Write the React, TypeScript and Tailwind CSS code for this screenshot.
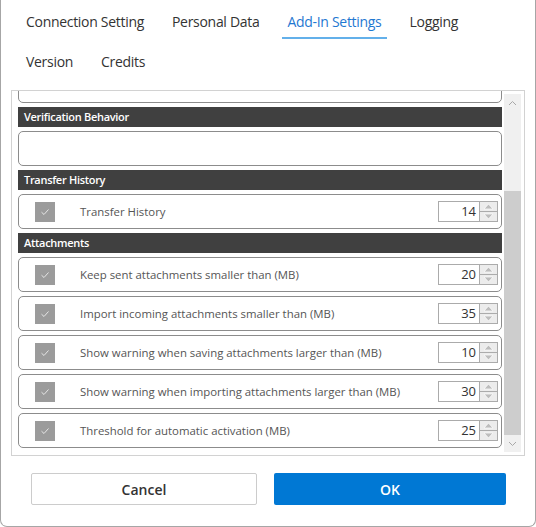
import React from "react";

const tabsRow1 = ["Connection Setting", "Personal Data", "Add-In Settings", "Logging"];
const tabsRow2 = ["Version", "Credits"];

function Tab({ label, active }: { label: string; active?: boolean }) {
  return (
    <div
      className={
        "px-[5px] pb-[5px] pt-[7px] text-[14px] tracking-[-0.3px] leading-[20px] border-b-2 " +
        (active ? "border-[#63b0ea] text-[#1f78d1]" : "border-transparent text-[#333]")
      }
    >
      {label}
    </div>
  );
}

function Header({ title }: { title: string }) {
  return (
    <div className="h-[20px] bg-[#404040] text-white text-[11px] tracking-[-0.3px] font-semibold leading-[20px] pl-[6px]">
      {title}
    </div>
  );
}

function Check() {
  return (
    <div className="w-[20px] h-[20px] bg-[#9b9b9b] flex items-center justify-center">
      <svg width="10" height="8" viewBox="0 0 10 8">
        <path d="M1.5 4.2 L4 6.5 L8.5 1.5" fill="none" stroke="#e6e6e6" strokeWidth="1" />
      </svg>
    </div>
  );
}

function Spin({ value }: { value: number }) {
  return (
    <div className="flex h-[21px]">
      <div className="w-[42px] h-full border border-[#ababab] bg-white text-right pr-[3px] text-[13px] leading-[19px] text-[#333]">
        {value}
      </div>
      <div className="w-[18px] h-full flex flex-col border border-l-0 border-[#ababab] bg-[#ababab] gap-[1px]">
        <div className="flex-1 bg-[#ececec] flex items-center justify-center">
          <svg width="11" height="7" viewBox="0 0 11 7">
            <path d="M1 6 L5.5 1 L10 6 Z" fill="#bdbdbd" stroke="#fafafa" strokeWidth="0.8" />
          </svg>
        </div>
        <div className="flex-1 bg-[#ececec] flex items-center justify-center">
          <svg width="11" height="7" viewBox="0 0 11 7">
            <path d="M1 1 L5.5 6 L10 1 Z" fill="#bdbdbd" stroke="#fafafa" strokeWidth="0.8" />
          </svg>
        </div>
      </div>
    </div>
  );
}

function Row({ label, value }: { label: string; value: number }) {
  return (
    <div className="h-[35px] border border-[#8c8c8c] rounded-[5px] flex items-center pl-[16px] pr-[3px]">
      <Check />
      <div className="ml-[25px] flex-1 text-[11.4px] text-[#555]">{label}</div>
      <Spin value={value} />
    </div>
  );
}

const attachments = [
  { label: "Keep sent attachments smaller than (MB)", value: 20 },
  { label: "Import incoming attachments smaller than (MB)", value: 35 },
  { label: "Show warning when saving attachments larger than (MB)", value: 10 },
  { label: "Show warning when importing attachments larger than (MB)", value: 30 },
  { label: "Threshold for automatic activation (MB)", value: 25 },
];

export default function App() {
  return (
    <div
      className="w-[536px] h-[527px] bg-white border border-t-0 border-[#a6a6a6] rounded-b-[7px] overflow-hidden flex flex-col"
      style={{ fontFamily: '"Open Sans", "Noto Sans", sans-serif' }}
    >
      {/* tabs */}
      <div className="pl-[20px] pt-[5px] flex flex-col gap-[6px]">
        <div className="flex gap-[18px]">
          {tabsRow1.map((t) => (
            <Tab key={t} label={t} active={t === "Add-In Settings"} />
          ))}
        </div>
        <div className="flex gap-[18px]">
          {tabsRow2.map((t) => (
            <Tab key={t} label={t} />
          ))}
        </div>
      </div>

      {/* settings panel */}
      <div className="mx-[10px] mt-[11px] h-[366px] border border-[#d2d2d2] flex">
        <div className="flex-1 overflow-hidden pl-[6px]">
          <div className="-mt-[23px] flex flex-col gap-[4px]">
            <div className="h-[35px] border border-[#8c8c8c] rounded-[5px]" />
            <Header title="Verification Behavior" />
            <div className="h-[35px] border border-[#8c8c8c] rounded-[5px]" />
            <Header title="Transfer History" />
            <Row label="Transfer History" value={14} />
            <Header title="Attachments" />
            {attachments.map((a) => (
              <Row key={a.label} label={a.label} value={a.value} />
            ))}
          </div>
        </div>
        <div className="pl-[2px] pr-[3px] py-[3px]">
          <div className="w-[17px] h-full bg-[#f0f0f0] flex flex-col">
            <div className="h-[17px] flex items-center justify-center">
              <svg width="9" height="6" viewBox="0 0 9 6">
                <path d="M1 5 L4.5 1.5 L8 5" fill="none" stroke="#a8a8a8" strokeWidth="1" />
              </svg>
            </div>
            <div className="h-[80px]" />
            <div className="flex-1 bg-[#cdcdcd]" />
            <div className="h-[17px] flex items-center justify-center">
              <svg width="9" height="6" viewBox="0 0 9 6">
                <path d="M1 1 L4.5 4.5 L8 1" fill="none" stroke="#a8a8a8" strokeWidth="1" />
              </svg>
            </div>
          </div>
        </div>
      </div>

      {/* buttons */}
      <div className="flex gap-[17px] pl-[30px] mt-[17px]">
        <button className="w-[226px] h-[32px] border border-[#cccccc] rounded-[2px] bg-white text-[14px] font-semibold text-[#333]">
          Cancel
        </button>
        <button className="w-[232px] h-[32px] rounded-[2px] bg-[#0078d4] text-[14px] font-semibold text-white">
          OK
        </button>
      </div>
    </div>
  );
}
